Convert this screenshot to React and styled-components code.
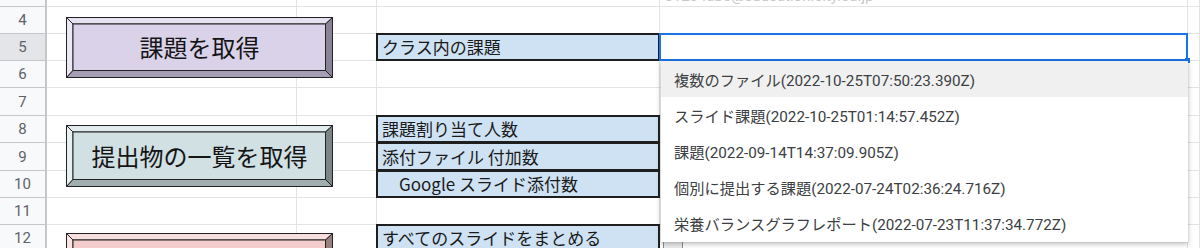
import React from "react";
import styled, { createGlobalStyle } from "styled-components";

const GlobalStyle = createGlobalStyle`
  html, body {
    margin: 0;
    padding: 0;
    background: #fff;
  }
  body {
    font-family: Roboto, "Noto Sans CJK JP", sans-serif;
    overflow: hidden;
  }
`;

// sheet rows visible in the window, with their pixel heights
const ROWS = [
  { n: 3, h: 7, hidden: true },
  { n: 4, h: 27 },
  { n: 5, h: 27, selected: true },
  { n: 6, h: 27 },
  { n: 7, h: 28 },
  { n: 8, h: 27 },
  { n: 9, h: 28 },
  { n: 10, h: 27 },
  { n: 11, h: 27 },
  { n: 12, h: 27 },
];

const COLS = 5;

const PALETTE = {
  purple: { face: "#d9d2e9", top: "#e6e1f1", left: "#ebe7f4", bottom: "#a59eb5", right: "#8a8398" },
  teal: { face: "#d0e0e3", top: "#e2ecee", left: "#e7f0f1", bottom: "#a1aeb0", right: "#7b8587" },
  pink: { face: "#f4cccc", top: "#f8dfdf", left: "#fae4e4", bottom: "#c3a0a0", right: "#9a7f7f" },
};

const OPTIONS = [
  "複数のファイル(2022-10-25T07:50:23.390Z)",
  "スライド課題(2022-10-25T01:14:57.452Z)",
  "課題(2022-09-14T14:37:09.905Z)",
  "個別に提出する課題(2022-07-24T02:36:24.716Z)",
  "栄養バランスグラフレポート(2022-07-23T11:37:34.772Z)",
];

const Bevel = ({ w, h, tone }) => {
  const c = PALETTE[tone];
  const d = 7;
  const s = { stroke: "#222", strokeWidth: 1, strokeLinejoin: "miter" };
  const W = w - 0.5;
  const H = h - 0.5;
  const o = 0.5;
  return (
    <BevelSvg width={w} height={h} viewBox={`0 0 ${w} ${h}`}>
      <polygon points={`${o},${o} ${W},${o} ${W - d},${d} ${d},${d}`} fill={c.top} {...s} />
      <polygon points={`${o},${o} ${d},${d} ${d},${H - d} ${o},${H}`} fill={c.left} {...s} />
      <polygon points={`${W},${o} ${W},${H} ${W - d},${H - d} ${W - d},${d}`} fill={c.right} {...s} />
      <polygon points={`${o},${H} ${d},${H - d} ${W - d},${H - d} ${W},${H}`} fill={c.bottom} {...s} />
      <rect x={d} y={d} width={W - 2 * d} height={H - 2 * d} fill={c.face} {...s} />
    </BevelSvg>
  );
};

const ActionButton = ({ row, top, h, tone, children }) => (
  <ButtonBox $row={row} $top={top} $h={h}>
    <Bevel w={267} h={h} tone={tone} />
    {children && <ButtonLabel>{children}</ButtonLabel>}
  </ButtonBox>
);

const App = () => {
  return (
    <>
      <GlobalStyle />
      <Sheet>
        {ROWS.map((r, i) => (
          <React.Fragment key={r.n}>
            <RowHeader $selected={r.selected} style={{ gridRow: i + 1 }}>
              {r.hidden ? null : r.n}
            </RowHeader>
            {Array.from({ length: COLS }).map((_, c) => (
              <Cell key={c} style={{ gridRow: i + 1, gridColumn: c + 2 }} />
            ))}
          </React.Fragment>
        ))}

        <FaintText>s1234abc@education.city.ed.jp</FaintText>

        <ActionButton row="2 / 5" top={10} h={61} tone="purple">
          課題を取得
        </ActionButton>
        <ActionButton row="6 / 9" top={9} h={62} tone="teal">
          提出物の一覧を取得
        </ActionButton>
        <ActionButton row="10 / 11" top={8} h={62} tone="pink" />

        <Label $row={3}>クラス内の課題</Label>
        <Label $row={6}>課題割り当て人数</Label>
        <Label $row={7}>添付ファイル 付加数</Label>
        <Label $row={8} $indent>
          Google スライド添付数
        </Label>
        <Label $row={10}>すべてのスライドをまとめる</Label>

        <SmallBox />
        <Selection />

        <Dropdown>
          {OPTIONS.map((o, i) => (
            <Option key={o} $active={i === 0}>
              {o}
            </Option>
          ))}
        </Dropdown>
      </Sheet>
    </>
  );
};

export default App;

const Sheet = styled.div`
  display: grid;
  grid-template-columns: 47px 250px 80px 283px 528px 1fr;
  grid-template-rows: ${ROWS.map((r) => `${r.h}px`).join(" ")};
  width: 1200px;
  height: 248px;
  overflow: hidden;
  background: #fff;
`;

const RowHeader = styled.div`
  grid-column: 1;
  display: flex;
  align-items: center;
  justify-content: center;
  background: ${(p) => (p.$selected ? "#e3e5e8" : "#f8f9fa")};
  border-right: 2px solid #c4c7c5;
  border-bottom: 1px solid #c4c7c5;
  color: #5f6368;
  font-family: Roboto, sans-serif;
  font-size: 15px;
  overflow: hidden;
`;

const Cell = styled.div`
  border-right: 1px solid #e2e3e3;
  border-bottom: 1px solid #e2e3e3;
`;

const FaintText = styled.div`
  grid-row: 1;
  grid-column: 5;
  align-self: end;
  padding-left: 5px;
  margin-bottom: 2px;
  height: 5px;
  overflow: hidden;
  display: flex;
  align-items: flex-end;
  color: #c8c8c8;
  font-size: 15px;
  line-height: 18px;
  z-index: 1;
`;

const ButtonBox = styled.div`
  grid-column: 2 / 4;
  grid-row: ${(p) => p.$row};
  align-self: start;
  position: relative;
  margin: ${(p) => p.$top}px 0 0 19px;
  width: 267px;
  height: ${(p) => p.$h}px;
  display: flex;
  align-items: center;
  justify-content: center;
  z-index: 2;
`;

const BevelSvg = styled.svg`
  position: absolute;
  inset: 0;
  display: block;
`;

const ButtonLabel = styled.span`
  position: relative;
  font-family: "Noto Sans CJK JP", sans-serif;
  font-size: 24px;
  color: #151515;
  line-height: 1;
  margin-top: -1px;
`;

const Label = styled.div`
  grid-column: 4;
  grid-row: ${(p) => p.$row};
  margin: -1px 0 0 -1px;
  border: 2px solid #1e1e1e;
  background: #cfe2f3;
  display: flex;
  align-items: flex-end;
  padding: 0 0 1px ${(p) => (p.$indent ? 21 : 4)}px;
  font-family: "Noto Sans CJK JP", sans-serif;
  font-size: 17px;
  line-height: 22px;
  color: #1a1a1a;
  white-space: nowrap;
  overflow: hidden;
  z-index: 1;
`;

const SmallBox = styled.div`
  grid-column: 5;
  grid-row: 10;
  align-self: start;
  justify-self: start;
  margin: 16px 0 0 3px;
  width: 18px;
  height: 12px;
  border: 1px solid #8a8a8a;
  background: #ececec;
  z-index: 1;
`;

const Selection = styled.div`
  grid-column: 5;
  grid-row: 3;
  position: relative;
  margin: -1px 0 0 -1px;
  border: 2px solid #1a73e8;
  z-index: 3;

  &::after {
    content: "";
    position: absolute;
    right: -4px;
    bottom: -4px;
    width: 5px;
    height: 5px;
    background: #1a73e8;
  }
`;

const Dropdown = styled.div`
  grid-column: 5;
  grid-row: 4 / 11;
  align-self: start;
  margin: 0 0 0 1px;
  height: 181px;
  background: #fff;
  box-shadow: 0 2px 5px rgba(60, 64, 67, 0.35), 0 0 1px rgba(60, 64, 67, 0.3);
  display: flex;
  flex-direction: column;
  z-index: 4;
`;

const Option = styled.div`
  height: 36px;
  flex: none;
  display: flex;
  align-items: center;
  padding-left: 13px;
  background: ${(p) => (p.$active ? "#f0f0f0" : "transparent")};
  color: #3c4043;
  font-family: Roboto, "Noto Sans CJK JP", sans-serif;
  font-size: 15.25px;
  white-space: nowrap;
`;
